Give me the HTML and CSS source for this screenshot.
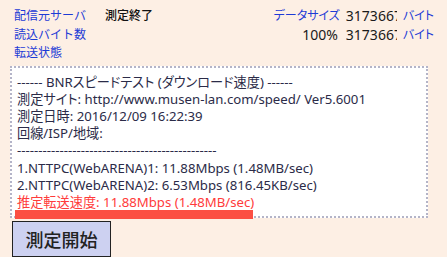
FILE: index.html
```html
<!DOCTYPE html>
<html lang="ja">
<head>
    <meta charset="UTF-8">
    <title>BNRスピードテスト</title>
    <link rel="stylesheet" href="styles.css">
</head>
<body>
    <div class="status-bar">
        <div class="status-left">
            <span class="label">配信元サーバ</span><span class="state">測定終了</span>
            <span class="label">読込バイト数</span><span></span>
            <span class="label">転送状態</span><span></span>
        </div>
        <div class="status-right">
            <span class="label size-label">データサイズ</span><span class="bytes">3173667</span><span class="label unit">バイト</span>
            <span class="percent">100%</span><span class="bytes">3173667</span><span class="label unit">バイト</span>
        </div>
    </div>
    <div class="result-box">
        <div class="result">------ BNRスピードテスト (ダウンロード速度) ------<br>
測定サイト: http://www.musen-lan.com/speed/ Ver5.6001<br>
測定日時: 2016/12/09 16:22:39<br>
回線/ISP/地域:<br>
-----------------------------------------------<br>
1.NTTPC(WebARENA)1: 11.88Mbps (1.48MB/sec)<br>
2.NTTPC(WebARENA)2: 6.53Mbps (816.45KB/sec)<br>
<span class="estimate">推定転送速度: 11.88Mbps (1.48MB/sec)</span></div>
        <div class="progress"></div>
    </div>
    <button class="start-btn">測定開始</button>
</body>
</html>
```
FILE: styles.css
```css
body {
    margin: 0;
    width: 447px;
    height: 257px;
    overflow: hidden;
    background-color: #fdefe4;
    font-family: "Noto Sans", "Noto Sans CJK JP", sans-serif;
    font-size: 12px;
    color: #111;
}
.status-bar {
    display: flex;
    justify-content: space-between;
    padding: 7px 13px 0 14px;
    line-height: 18.5px;
}
.status-left {
    display: grid;
    grid-template-columns: 91px auto;
}
.status-right {
    display: grid;
    grid-template-columns: auto 51px auto;
    column-gap: 6px;
    align-content: start;
}
.label {
    color: #1d3bd6;
}
.size-label,
.unit {
    font-feature-settings: "palt";
}
.size-label {
    text-align: right;
}
.state {
    color: #111;
    font-weight: 500;
}
.percent,
.bytes {
    font-size: 14px;
    color: #1a1a1a;
}
.percent {
    text-align: right;
    margin-right: 2px;
}
.bytes {
    overflow: hidden;
    white-space: nowrap;
}
.result-box {
    position: relative;
    margin: 3px 0 0 10px;
    width: 414px;
    height: 148px;
    background: white;
    border: 2px dotted #b4b4c8;
}
.result {
    padding: 6px 0 0 5px;
    font-size: 13.2px;
    line-height: 17.2px;
    color: #2b2b48;
    white-space: nowrap;
    font-feature-settings: "palt";
}
.estimate {
    color: #ff3b3b;
}
.progress {
    position: absolute;
    left: 3px;
    top: 142px;
    width: 238px;
    height: 9px;
    background: #fc4f43;
}
.start-btn {
    display: block;
    margin: 3px 0 0 12px;
    width: 99px;
    height: 36px;
    background: #cdd1f1;
    border: 1px solid #222;
    border-radius: 0;
    font-family: "Noto Sans CJK JP", sans-serif;
    font-size: 18px;
    font-weight: 500;
    color: #222;
    padding: 0;
}
```
